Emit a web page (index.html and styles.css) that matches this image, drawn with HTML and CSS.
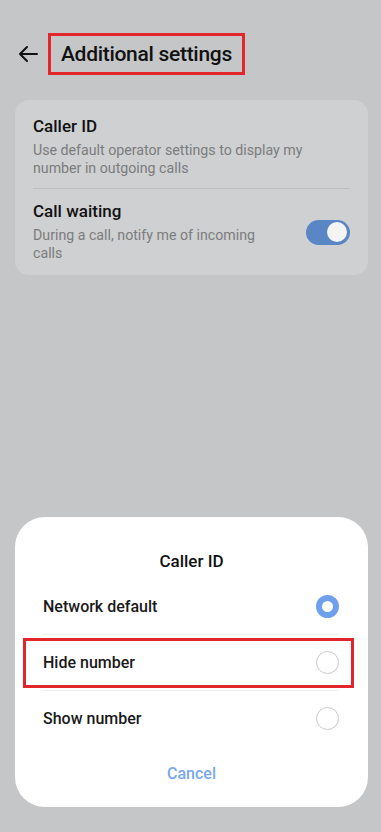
FILE: index.html
```html
<!DOCTYPE html>
<html lang="en">
<head>
    <meta charset="UTF-8">
    <meta name="viewport" content="width=device-width, initial-scale=1.0">
    <title>Additional settings</title>
    <link rel="stylesheet" href="styles.css">
</head>
<body>
    <div class="header">
        <svg class="back" viewBox="0 0 22 22" width="22" height="22">
            <path d="M20 11H3M10 4L3 11L10 18" fill="none" stroke="#111" stroke-width="2" stroke-linecap="round" stroke-linejoin="round"/>
        </svg>
        <div class="title">Additional settings</div>
    </div>

    <div class="card">
        <div class="row">
            <div class="row-text">
                <div class="row-title">Caller ID</div>
                <div class="row-sub">Use default operator settings to display my number in outgoing calls</div>
            </div>
        </div>
        <div class="row">
            <div class="row-text narrow">
                <div class="row-title">Call waiting</div>
                <div class="row-sub">During a call, notify me of incoming calls</div>
            </div>
            <div class="toggle"><div class="knob"></div></div>
        </div>
    </div>

    <div class="dialog">
        <div class="dialog-title">Caller ID</div>
        <div class="options">
            <div class="option">
                <span>Network default</span>
                <span class="radio checked"></span>
            </div>
            <div class="option">
                <span>Hide number</span>
                <span class="radio"></span>
                <div class="mark"></div>
            </div>
            <div class="option">
                <span>Show number</span>
                <span class="radio"></span>
            </div>
        </div>
        <div class="cancel">Cancel</div>
    </div>
</body>
</html>
```

FILE: styles.css
```css
body {
    margin: 0;
    padding: 0;
    width: 381px;
    height: 832px;
    display: flex;
    flex-direction: column;
    background-color: #c5c6c8;
    font-family: Roboto, "Noto Sans", sans-serif;
    color: #111;
    overflow: hidden;
}

.header {
    display: flex;
    align-items: center;
    padding: 33px 0 0 17px;
}

.back {
    margin-right: 9px;
}

.title {
    border: 3px solid #e3262b;
    padding: 4px 10px;
    font-size: 21px;
    line-height: 28px;
    font-weight: 500;
    letter-spacing: -0.3px;
}

.card {
    margin: 25px 13px 0 15px;
    padding: 0 18px;
    background-color: #cfd0d1;
    border-radius: 14px;
}

.row {
    display: flex;
    align-items: center;
    justify-content: space-between;
    padding: 15px 0 11px;
}

.row + .row {
    border-top: 1px solid #bdbec0;
    padding: 11px 0 13px;
}

.row-text.narrow {
    max-width: 245px;
}

.row-title {
    font-size: 17px;
    line-height: 22px;
    font-weight: 500;
}

.row-sub {
    margin-top: 4px;
    font-size: 14.2px;
    line-height: 18px;
    color: #7b7c7e;
}

.toggle {
    width: 44px;
    height: 25px;
    border-radius: 13px;
    background-color: #5b86c6;
    display: flex;
    align-items: center;
    justify-content: flex-end;
    padding: 0 3px;
    box-sizing: border-box;
    margin-top: 2px;
}

.knob {
    width: 20px;
    height: 20px;
    border-radius: 50%;
    background-color: #f4f4f4;
}

.dialog {
    margin: auto 13px 25px 15px;
    padding: 32px 0 22px;
    background-color: #fff;
    border-radius: 30px;
}

.dialog-title {
    text-align: center;
    font-size: 17px;
    line-height: 24px;
    font-weight: 500;
}

.options {
    margin: 6px 29px 0 28px;
}

.option {
    position: relative;
    height: 55px;
    display: flex;
    align-items: center;
    justify-content: space-between;
    font-size: 16px;
    font-weight: 500;
    color: #1a1a1a;
}

.option + .option {
    border-top: 1px solid #eeeeee;
}

.radio {
    width: 23px;
    height: 23px;
    border-radius: 50%;
    border: 1.5px solid #c9c9c9;
    box-sizing: border-box;
}

.radio.checked {
    border: 6.5px solid #6fa0ee;
}

.mark {
    position: absolute;
    left: -20px;
    right: -15px;
    top: 3px;
    bottom: 2px;
    border: 3px solid #e3262b;
}

.cancel {
    margin-top: 17px;
    text-align: center;
    font-size: 16px;
    line-height: 22px;
    font-weight: 500;
    color: #78a8f0;
}
```
